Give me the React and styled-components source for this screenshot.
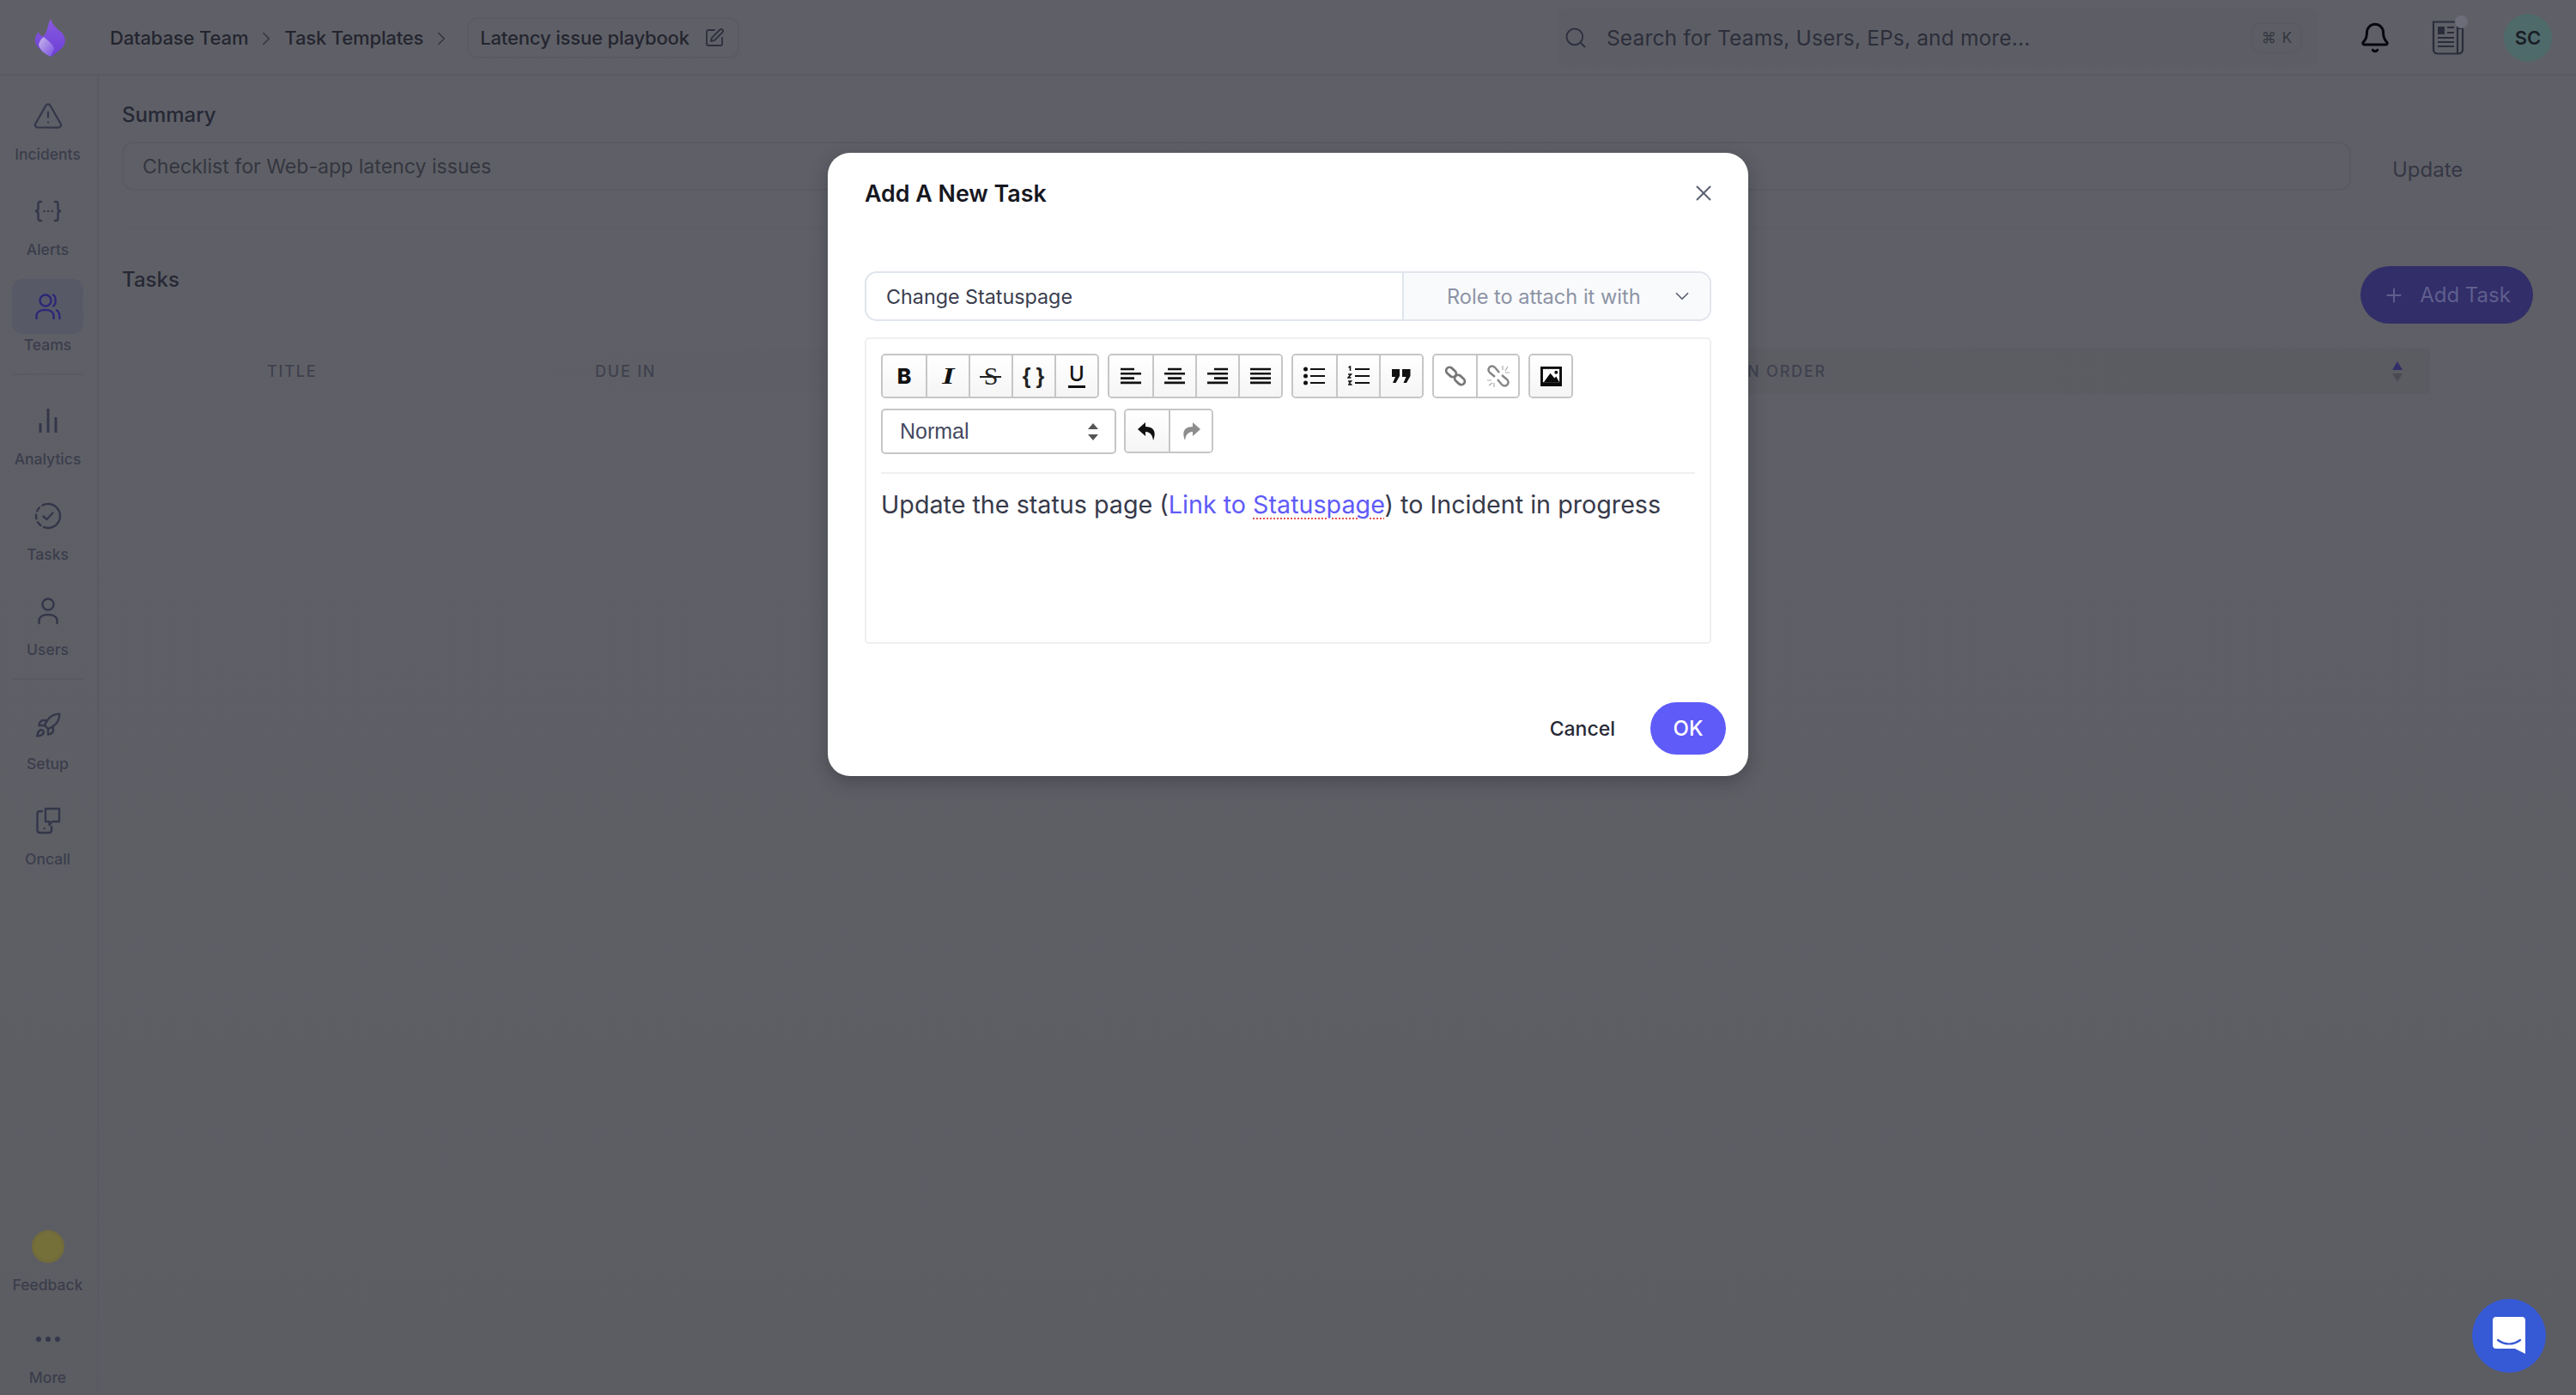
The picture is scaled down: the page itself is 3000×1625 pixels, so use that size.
import React from "react";
import styled, { createGlobalStyle } from "styled-components";
import { Bell, ChevronDown, ChevronRight, Plus, Rocket, Search, SquarePen, TriangleAlert, X } from "lucide-react";

const GlobalStyle = createGlobalStyle`
  html, body { margin: 0; padding: 0; }
  body { font-family: Inter, "Noto Sans", sans-serif; background: #5f6067; }
  * { box-sizing: border-box; }
`;

const Page = styled.div`
  position: relative;
  width: 3000px;
  height: 1625px;
  overflow: hidden;
  display: flex;
  flex-direction: column;
  color: #2f3142;
  background: linear-gradient(180deg, #5f6067 0%, #5e5f65 60%, #5c5d62 100%);
`;

/* top bar */
const TopBar = styled.header`
  flex: 0 0 88px;
  display: flex;
  align-items: center;
  padding: 2px 28px 0 40px;
  border-bottom: 2px solid #595a62;
`;
const LogoMark = styled.svg`
  width: 37px;
  height: 44px;
  margin-right: 51px;
`;
const Crumb = styled.span`
  font-size: 22px;
  font-weight: 500;
  letter-spacing: -0.15px;
  color: #24252f;
  white-space: nowrap;
`;
const CrumbArrow = styled(ChevronRight)`
  width: 26px;
  height: 26px;
  margin: 2px 8px 0 8px;
  color: #343643;
  stroke-width: 1.5;
`;
const TitleTag = styled.div`
  display: flex;
  align-items: center;
  gap: 17px;
  height: 48px;
  margin-left: 9px;
  padding: 0 15px 0 13px;
  border: 2px solid #5a5b63;
  border-radius: 12px;
`;
const EditIcon = styled(SquarePen)`
  width: 24px;
  height: 24px;
  color: #2c2e3c;
  stroke-width: 1.8;
`;
const SearchBox = styled.div`
  width: 887px;
  height: 68px;
  margin-left: auto;
  display: flex;
  align-items: center;
  padding: 0 19px 0 8px;
  background: #5d5e65;
  border-radius: 10px;
`;
const SearchGlyph = styled(Search)`
  width: 28px;
  height: 28px;
  color: #2f3140;
  stroke-width: 1.7;
  margin-right: 22px;
`;
const SearchText = styled.span`
  flex: 1;
  font-size: 24.5px;
  letter-spacing: 0.15px;
  color: #2c2e3b;
`;
const KeyHint = styled.span`
  width: 59px;
  height: 36px;
  display: flex;
  align-items: center;
  justify-content: center;
  gap: 7px;
  font-size: 17px;
  color: #34363f;
  border: 2px solid #5a5b62;
  border-radius: 10px;
`;
const BellIcon = styled(Bell)`
  width: 38px;
  height: 42px;
  margin-left: 47px;
  color: #07080e;
  stroke-width: 1.9;
`;
const NewsWrap = styled.div`
  position: relative;
  width: 38px;
  height: 40px;
  margin-left: 47px;
`;
const NewsDot = styled.span`
  position: absolute;
  top: -6px;
  right: -4px;
  width: 15px;
  height: 15px;
  border-radius: 50%;
  background: #6c6d78;
`;
const Avatar = styled.div`
  width: 56px;
  height: 56px;
  margin-left: 46px;
  border-radius: 50%;
  background: #4f6a6b;
  display: flex;
  align-items: center;
  justify-content: center;
  font-size: 22px;
  font-weight: 600;
  color: #1a1e26;
`;

/* sidebar */
const Body = styled.div`
  flex: 1;
  display: flex;
  min-height: 0;
`;
const Sidebar = styled.nav`
  flex: 0 0 114px;
  display: flex;
  flex-direction: column;
  padding: 12px 16px 10px 14px;
  border-right: 2px solid #595a62;
`;
const NavGroup = styled.div`
  display: flex;
  flex-direction: column;
  gap: ${(p) => p.$gap || 21}px;
  margin-top: ${(p) => (p.$bottom ? "auto" : "0")};
`;
const NavItem = styled.div`
  display: flex;
  flex-direction: column;
  align-items: center;
  height: 90px;
`;
const NavIcon = styled.div`
  width: 83px;
  height: 64px;
  margin: 3px 0;
  display: flex;
  align-items: center;
  justify-content: center;
  border-radius: 12px;
  color: ${(p) => (p.$active ? "#2c2878" : "#34364a")};
  background: ${(p) => (p.$active ? "#585967" : "transparent")};
`;
const NavLabel = styled.span`
  height: 20px;
  line-height: 20px;
  font-size: 17.5px;
  font-weight: 500;
  color: #3b3d4c;
  white-space: nowrap;
`;
const NavRule = styled.hr`
  width: 83px;
  height: 2px;
  margin: 23px 0 18px;
  border: 0;
  background: #595a62;
`;
const FeedbackDot = styled.span`
  width: 38px;
  height: 38px;
  border-radius: 50%;
  background: #75703a;
  border: 3px solid #716c3a;
`;
const MoreDots = styled.span`
  display: flex;
  gap: 5px;
  i {
    width: 6px;
    height: 6px;
    border-radius: 50%;
    background: #34364a;
  }
`;

/* content behind the dialog */
const Main = styled.main`
  flex: 1;
  min-width: 0;
  padding: 30px 30px 0 27px;
`;
const SectionLabel = styled.div`
  font-size: 24px;
  line-height: 32px;
  font-weight: 500;
  color: #262835;
`;
const SummaryRow = styled.div`
  display: flex;
  align-items: center;
  margin-top: 15px;
`;
const SummaryInput = styled.div`
  width: 2596px;
  height: 57px;
  display: flex;
  align-items: center;
  padding-left: 22px;
  border: 2px solid #595a62;
  border-radius: 14px;
  font-size: 23.1px;
  color: #34363f;
`;
const UpdateText = styled.span`
  margin-left: 48px;
  padding-top: 8px;
  font-size: 24px;
  color: #353745;
`;
const Rule = styled.hr`
  height: 2px;
  margin: 42px 0 0;
  border: 0;
  background: #5c5d65;
`;
const TasksRow = styled.div`
  display: flex;
  justify-content: space-between;
  align-items: flex-start;
  margin-top: 44px;
  padding-right: 20px;
`;
const AddTask = styled.div`
  width: 201px;
  height: 67px;
  display: flex;
  align-items: center;
  justify-content: center;
  gap: 17px;
  border-radius: 34px;
  background: #322e69;
  font-size: 24px;
  color: #5f5f8e;
`;
const TableHead = styled.div`
  display: grid;
  grid-template-columns: 382px 780px 654px 1fr;
  align-items: center;
  height: 53px;
  margin: 29px 140px 0 0;
  padding: 0 31px 0 169px;
  background: linear-gradient(90deg, #5f6067 0%, #5b5c61 100%);
`;
const HeadCell = styled.span`
  font-size: 18px;
  font-weight: 500;
  letter-spacing: 1.8px;
  color: #3f414e;
  text-align: ${(p) => (p.$right ? "right" : "left")};
`;
const SortIcon = styled.svg`
  width: 14px;
  height: 26px;
  justify-self: end;
`;

/* dialog */
const Backdrop = styled.div`
  position: absolute;
  inset: 0;
  display: flex;
  justify-content: center;
  align-items: flex-start;
  padding-top: 178px;
`;
const Modal = styled.div`
  width: 1072px;
  height: 726px;
  padding: 28px 26px 25px 43px;
  background: #fff;
  border-radius: 26px;
  box-shadow: 0 6px 20px rgba(30, 31, 40, 0.35);
`;
const ModalHead = styled.div`
  display: flex;
  align-items: center;
  justify-content: space-between;
  height: 38px;
  margin-bottom: 72px;
  padding-right: 11px;
`;
const ModalTitle = styled.h2`
  margin: 0;
  font-size: 26.8px;
  font-weight: 600;
  color: #16171f;
`;
const CloseIcon = styled(X)`
  width: 30px;
  height: 30px;
  color: #5a6072;
  stroke-width: 1.6;
`;
const FieldRow = styled.div`
  display: flex;
  width: 986px;
  height: 58px;
  border: 2px solid #e0e5ed;
  border-radius: 14px;
  overflow: hidden;
`;
const TitleField = styled.div`
  flex: 0 0 626px;
  display: flex;
  align-items: center;
  padding-left: 23px;
  font-size: 23.3px;
  color: #3a3d4e;
  border-right: 2px solid #e0e5ed;
`;
const RoleField = styled.div`
  flex: 1;
  display: flex;
  align-items: center;
  justify-content: space-between;
  padding: 0 19px 0 50px;
  background: #f9fafb;
  font-size: 23.6px;
  color: #8d93a6;
`;
const RoleArrow = styled(ChevronDown)`
  width: 26px;
  height: 26px;
  color: #5c6173;
  stroke-width: 1.6;
`;
const Editor = styled.div`
  width: 986px;
  height: 357px;
  margin-top: 19px;
  padding: 17px 17px 0 17px;
  border: 2px solid #eff0f2;
  border-radius: 5px;
`;
const Toolbar = styled.div`
  display: flex;
  flex-direction: column;
  gap: 12px;
  padding-bottom: 21px;
  border-bottom: 2px solid #efefef;
`;
const ToolRow = styled.div`
  display: flex;
  gap: ${(p) => p.$gap || 10}px;
`;
const ToolGroup = styled.div`
  display: flex;
  height: 52px;
  border: 2px solid #c6c6c6;
  border-radius: 5px;
  overflow: hidden;
`;
const ToolButton = styled.div`
  position: relative;
  width: ${(p) => p.$w || 50}px;
  display: flex;
  align-items: center;
  justify-content: center;
  background: ${(p) => (p.$plain ? "#fff" : "linear-gradient(180deg, #fff 0%, #f5f5f5 100%)")};
  color: #111;
  & + & {
    border-left: 2px solid #c6c6c6;
  }
`;
const GlyphBold = styled.span`
  font: 800 25px/1 Inter, sans-serif;
  color: #111;
`;
const GlyphItalic = styled.span`
  font: italic 700 27px/1 "Liberation Serif", serif;
  color: #111;
  transform: scaleX(1.35);
`;
const GlyphStrike = styled.span`
  font: 400 30px/1 "Liberation Serif", serif;
  color: #222;
  &::after {
    content: "";
    position: absolute;
    left: 11px;
    right: 12px;
    top: 24px;
    height: 2px;
    background: #222;
  }
`;
const GlyphBrace = styled.span`
  font: 700 25px/1 "Liberation Sans", sans-serif;
  letter-spacing: 1px;
  color: #222;
  word-spacing: -3px;
`;
const GlyphUnder = styled.span`
  font: 500 24px/1 Inter, sans-serif;
  width: 20px;
  text-align: center;
  color: #111;
  padding-bottom: 1px;
  border-bottom: 3px solid #111;
`;
const HeadingSelect = styled.div`
  width: 274px;
  height: 53px;
  display: flex;
  align-items: center;
  justify-content: space-between;
  padding: 0 18px 0 20px;
  border: 2px solid #c6c6c6;
  border-radius: 5px;
  font: 400 25px "Liberation Sans", Arial, sans-serif;
  color: #454a60;
`;
const EditorText = styled.p`
  margin: 16px 0 0;
  font-size: 28.7px;
  line-height: 40px;
  color: #373a4a;
  white-space: nowrap;
`;
const EditorLink = styled.span`
  color: #5f5bf8;
`;
const Misspelt = styled.span`
  text-decoration: underline dotted #e4534f 2px;
  text-underline-offset: 5px;
`;
const ModalFoot = styled.div`
  display: flex;
  align-items: center;
  justify-content: flex-end;
  gap: 41px;
  margin-top: 68px;
`;
const CancelText = styled.span`
  font-size: 23px;
  font-weight: 500;
  color: #262835;
`;
const OkButton = styled.div`
  width: 88px;
  height: 61px;
  display: flex;
  align-items: center;
  justify-content: center;
  border-radius: 31px;
  background: #5f5bf8;
  font-size: 24px;
  font-weight: 500;
  color: #fff;
`;
const ChatBubble = styled.div`
  position: absolute;
  left: 2879px;
  top: 1513px;
  width: 86px;
  height: 86px;
  display: flex;
  align-items: center;
  justify-content: center;
  border-radius: 50%;
  background: #3659d6;
`;

const ThinIcon = ({ w = 34, h = 34, children }) => (
  <svg width={w} height={h} viewBox={`0 0 ${w} ${h}`} fill="none" stroke="currentColor" strokeWidth="2.4" strokeLinecap="round" strokeLinejoin="round">
    {children}
  </svg>
);

const AlertsIcon = () => (
  <ThinIcon w={32} h={26}>
    <path d="M8 2H6.5C5 2 4.5 3 4.5 4.5V10C4.5 11.5 3.5 12.5 2 13C3.5 13.5 4.5 14.5 4.5 16V21.5C4.5 23 5 24 6.5 24H8" />
    <path d="M24 2H25.5C27 2 27.5 3 27.5 4.5V10C27.5 11.5 28.5 12.5 30 13C28.5 13.5 27.5 14.5 27.5 16V21.5C27.5 23 27 24 25.5 24H24" />
    <path d="M11.5 13H11.6M16 13H16.1M20.5 13H20.6" />
  </ThinIcon>
);
const TeamsIcon = () => (
  <ThinIcon w={32} h={32}>
    <circle cx="13" cy="9" r="6.5" />
    <path d="M22 2.5C25.5 4 25.5 14 22 15.5" />
    <path d="M2.5 30V27C2.5 22.5 7 20 12.5 20S22.5 22.5 22.5 27V30" />
    <path d="M26 20.5C28.5 21.5 29.5 24 29.5 30" />
  </ThinIcon>
);
const AnalyticsIcon = () => (
  <ThinIcon w={26} h={32}>
    <path d="M4 30V19M13 30V2M22 30V12" strokeWidth="3" strokeLinecap="butt" />
  </ThinIcon>
);
const TasksIcon = () => (
  <ThinIcon w={32} h={32}>
    <path d="M16 2A14 14 0 0 1 16 30" />
    <path d="M16 30A14 14 0 0 1 2 16A14 14 0 0 1 16 2" strokeDasharray="5 4.2" />
    <path d="M10.5 16.5L14.5 20L21.5 12.5" />
  </ThinIcon>
);
const UsersIcon = () => (
  <ThinIcon w={26} h={32}>
    <circle cx="13" cy="8" r="6.5" />
    <path d="M2.5 30V27C2.5 22.5 7 20 13 20S23.5 22.5 23.5 27V30" />
  </ThinIcon>
);
const OncallIcon = () => (
  <ThinIcon w={32} h={34}>
    <path d="M9 6H6.5C4.5 6 3.5 7 3.5 9V28C3.5 30 4.5 31 6.5 31H17C19 31 20 30 20 28V24" />
    <path d="M13 3H29V18H21L17.5 22V18H13Z" />
    <path d="M11.5 26H11.6" />
  </ThinIcon>
);
const NewsIcon = () => (
  <svg width="38" height="40" viewBox="0 0 38 40" fill="none" stroke="#2a2c3a" strokeWidth="2.2">
    <path d="M2 1.5H30V38.5H7C4 38.5 2 36.5 2 33.5Z" />
    <path d="M30 9H36V34C36 37 34 38.5 30 38.5" />
    <rect x="7" y="7" width="8" height="9" fill="#2a2c3a" stroke="none" />
    <path d="M18 8H26M18 14H26M7 20H26M7 25H26M7 30H26" />
  </svg>
);
const AlignIcon = ({ widths }) => (
  <svg width="26" height="22" viewBox="0 0 26 22" stroke="#111" strokeWidth="2.6">
    {widths.map(([x1, x2], i) => (
      <line key={i} x1={x1} x2={x2} y1={3 + i * 5.3} y2={3 + i * 5.3} />
    ))}
  </svg>
);
const BulletIcon = () => (
  <svg width="26" height="22" viewBox="0 0 26 22" fill="#111" stroke="#111" strokeWidth="2.2">
    <path d="M8 3H25M8 11H25M8 19H25" />
    <circle cx="2.5" cy="3" r="1.4" />
    <circle cx="2.5" cy="11" r="1.4" />
    <circle cx="2.5" cy="19" r="1.4" />
  </svg>
);
const NumberIcon = () => (
  <svg width="27" height="24" viewBox="0 0 27 24" fill="none" stroke="#111" strokeWidth="2.2">
    <path d="M9 4H26M9 12H26M9 20H26" />
    <path d="M1.5 2L3.5 1V6" strokeWidth="1.5" />
    <path d="M1 10H4.5L1 14H4.5" strokeWidth="1.5" />
    <path d="M1 18H4.5L2.5 20L4.5 22H1" strokeWidth="1.5" />
  </svg>
);
const QuoteIcon = () => (
  <svg width="22" height="16" viewBox="0 0 22 16" fill="#111">
    <path d="M0 0H9V8L4.5 16H1L4 9H0ZM12 0H21.5V8L17 16H13.5L16.5 9H12Z" />
  </svg>
);
const LinkIcon = () => (
  <svg width="26" height="26" viewBox="0 0 26 26" fill="none" stroke="#777" strokeWidth="2.8">
    <rect x="1.5" y="4.5" width="13" height="8" rx="4" transform="rotate(42 8 8.5)" />
    <rect x="11.5" y="13.5" width="13" height="8" rx="4" transform="rotate(42 18 17.5)" />
  </svg>
);
const UnlinkIcon = () => (
  <svg width="26" height="26" viewBox="0 0 26 26" fill="none" stroke="#858585" strokeWidth="2.4">
    <path d="M14 9L9 3C7 1 4 1 2.5 3C1 5 1 7 3 9L9 14" />
    <path d="M12 17L17 23C19 25 22 25 23.5 23C25 21 25 19 23 17L17 12" />
    <path d="M18 1V6M24 2L21 7M26 9H21M0 18H5M2 24L6 21M8 26V21" strokeWidth="1.2" stroke="#aaa" />
  </svg>
);
const ImageIcon = () => (
  <svg width="25" height="23" viewBox="0 0 26 24">
    <rect width="26" height="24" fill="#0b0b0b" />
    <rect x="3" y="3" width="20" height="16" fill="#fff" />
    <path d="M4 19L12 8L17 14L19 12L23 19Z" fill="#0b0b0b" />
    <circle cx="19" cy="7" r="2" fill="#0b0b0b" />
  </svg>
);
const TurnIcon = ({ flip, color }) => (
  <svg width="22" height="23" viewBox="0 0 22 23" fill={color} style={flip ? { transform: "scaleX(-1)" } : undefined}>
    <path d="M9 1L0 9L9 17V12C14 12 17 15 18 22C21 15 21 6 9 6Z" />
  </svg>
);
const UpDown = () => (
  <svg width="14" height="22" viewBox="0 0 14 22" fill="#555">
    <path d="M7 1L13 8H1ZM7 21L1 14H13Z" />
  </svg>
);
const Logo = () => (
  <LogoMark viewBox="0 0 37 44">
    <defs>
      <linearGradient id="flameA" x1="0" y1="0" x2="0" y2="1">
        <stop offset="0" stopColor="#8b5ae0" />
        <stop offset="1" stopColor="#6a3fd6" />
      </linearGradient>
      <linearGradient id="flameB" x1="0" y1="0" x2="1" y2="1">
        <stop offset="0" stopColor="#c8b8ea" />
        <stop offset="1" stopColor="#7a4fe0" />
      </linearGradient>
    </defs>
    <path d="M19 0C21 7 26 11 32 16C37 22 37 29 32 34L20 44C12 40 3 35 1 27C0 21 3 18 5 15C6 19 8 20 11 20C16 14 15 7 19 0Z" fill="url(#flameA)" />
    <path d="M11 21C15 25 22 29 23 35L19 44C12 41 6 36 5 30C6 26 8 23 11 21Z" fill="url(#flameB)" />
  </LogoMark>
);

export default function App() {
  return (
    <Page>
      <GlobalStyle />
      <TopBar>
        <Logo />
        <Crumb>Database Team</Crumb>
        <CrumbArrow />
        <Crumb>Task Templates</Crumb>
        <CrumbArrow />
        <TitleTag>
          <Crumb>Latency issue playbook</Crumb>
          <EditIcon />
        </TitleTag>
        <SearchBox>
          <SearchGlyph />
          <SearchText>Search for Teams, Users, EPs, and more...</SearchText>
          <KeyHint>
            <span>⌘</span>
            <span>K</span>
          </KeyHint>
        </SearchBox>
        <BellIcon />
        <NewsWrap>
          <NewsIcon />
          <NewsDot />
        </NewsWrap>
        <Avatar>SC</Avatar>
      </TopBar>
      <Body>
        <Sidebar>
          <NavGroup>
            <NavItem>
              <NavIcon><TriangleAlert size={36} strokeWidth={1.5} /></NavIcon>
              <NavLabel>Incidents</NavLabel>
            </NavItem>
            <NavItem>
              <NavIcon><AlertsIcon /></NavIcon>
              <NavLabel>Alerts</NavLabel>
            </NavItem>
            <NavItem>
              <NavIcon $active><TeamsIcon /></NavIcon>
              <NavLabel>Teams</NavLabel>
            </NavItem>
          </NavGroup>
          <NavRule />
          <NavGroup>
            <NavItem>
              <NavIcon><AnalyticsIcon /></NavIcon>
              <NavLabel>Analytics</NavLabel>
            </NavItem>
            <NavItem>
              <NavIcon><TasksIcon /></NavIcon>
              <NavLabel>Tasks</NavLabel>
            </NavItem>
            <NavItem>
              <NavIcon><UsersIcon /></NavIcon>
              <NavLabel>Users</NavLabel>
            </NavItem>
          </NavGroup>
          <NavRule />
          <NavGroup>
            <NavItem>
              <NavIcon><Rocket size={32} strokeWidth={1.8} /></NavIcon>
              <NavLabel>Setup</NavLabel>
            </NavItem>
            <NavItem>
              <NavIcon><OncallIcon /></NavIcon>
              <NavLabel>Oncall</NavLabel>
            </NavItem>
          </NavGroup>
          <NavGroup $bottom $gap={18}>
            <NavItem>
              <NavIcon><FeedbackDot /></NavIcon>
              <NavLabel>Feedback</NavLabel>
            </NavItem>
            <NavItem>
              <NavIcon><MoreDots><i /><i /><i /></MoreDots></NavIcon>
              <NavLabel>More</NavLabel>
            </NavItem>
          </NavGroup>
        </Sidebar>
        <Main>
          <SectionLabel>Summary</SectionLabel>
          <SummaryRow>
            <SummaryInput>Checklist for Web-app latency issues</SummaryInput>
            <UpdateText>Update</UpdateText>
          </SummaryRow>
          <Rule />
          <TasksRow>
            <SectionLabel>Tasks</SectionLabel>
            <AddTask>
              <Plus size={26} strokeWidth={1.8} />
              <span>Add Task</span>
            </AddTask>
          </TasksRow>
          <TableHead>
            <HeadCell>TITLE</HeadCell>
            <HeadCell>DUE IN</HeadCell>
            <HeadCell $right>EXECUTION ORDER</HeadCell>
            <SortIcon viewBox="0 0 14 26">
              <path d="M7 1L13 11H1Z" fill="#322e69" />
              <path d="M7 25L1 15H13Z" fill="#4a4b52" />
            </SortIcon>
          </TableHead>
        </Main>
      </Body>

      <Backdrop>
        <Modal>
          <ModalHead>
            <ModalTitle>Add A New Task</ModalTitle>
            <CloseIcon />
          </ModalHead>
          <FieldRow>
            <TitleField>Change Statuspage</TitleField>
            <RoleField>
              <span>Role to attach it with</span>
              <RoleArrow />
            </RoleField>
          </FieldRow>
          <Editor>
            <Toolbar>
              <ToolRow>
                <ToolGroup>
                  <ToolButton><GlyphBold>B</GlyphBold></ToolButton>
                  <ToolButton><GlyphItalic>I</GlyphItalic></ToolButton>
                  <ToolButton><GlyphStrike>S</GlyphStrike></ToolButton>
                  <ToolButton><GlyphBrace>{"{ }"}</GlyphBrace></ToolButton>
                  <ToolButton><GlyphUnder>U</GlyphUnder></ToolButton>
                </ToolGroup>
                <ToolGroup>
                  <ToolButton><AlignIcon widths={[[1, 17], [1, 25], [1, 17], [1, 25]]} /></ToolButton>
                  <ToolButton><AlignIcon widths={[[5, 21], [1, 25], [5, 21], [1, 25]]} /></ToolButton>
                  <ToolButton><AlignIcon widths={[[9, 25], [1, 25], [9, 25], [1, 25]]} /></ToolButton>
                  <ToolButton><AlignIcon widths={[[1, 25], [1, 25], [1, 25], [1, 25]]} /></ToolButton>
                </ToolGroup>
                <ToolGroup>
                  <ToolButton><BulletIcon /></ToolButton>
                  <ToolButton><NumberIcon /></ToolButton>
                  <ToolButton><QuoteIcon /></ToolButton>
                </ToolGroup>
                <ToolGroup>
                  <ToolButton $plain $w={49}><LinkIcon /></ToolButton>
                  <ToolButton $plain $w={49}><UnlinkIcon /></ToolButton>
                </ToolGroup>
                <ToolGroup>
                  <ToolButton $w={48}><ImageIcon /></ToolButton>
                </ToolGroup>
              </ToolRow>
              <ToolRow $gap={9}>
                <HeadingSelect>
                  <span>Normal</span>
                  <UpDown />
                </HeadingSelect>
                <ToolGroup>
                  <ToolButton><TurnIcon color="#111" /></ToolButton>
                  <ToolButton $plain><TurnIcon flip color="#8d8d8d" /></ToolButton>
                </ToolGroup>
              </ToolRow>
            </Toolbar>
            <EditorText>
              Update the status page (<EditorLink>Link to <Misspelt>Statuspage</Misspelt></EditorLink>) to Incident in progress
            </EditorText>
          </Editor>
          <ModalFoot>
            <CancelText>Cancel</CancelText>
            <OkButton>OK</OkButton>
          </ModalFoot>
        </Modal>
      </Backdrop>

      <ChatBubble>
        <svg width="38" height="44" viewBox="0 0 38 44">
          <path d="M4 0H34C36.5 0 38 1.5 38 4V43L26 37H4C1.5 37 0 35.5 0 33V4C0 1.5 1.5 0 4 0Z" fill="#fff" />
          <path d="M6 27C14 33 24 33 32 27" fill="none" stroke="#3659d6" strokeWidth="2.2" strokeLinecap="round" />
        </svg>
      </ChatBubble>
    </Page>
  );
}
